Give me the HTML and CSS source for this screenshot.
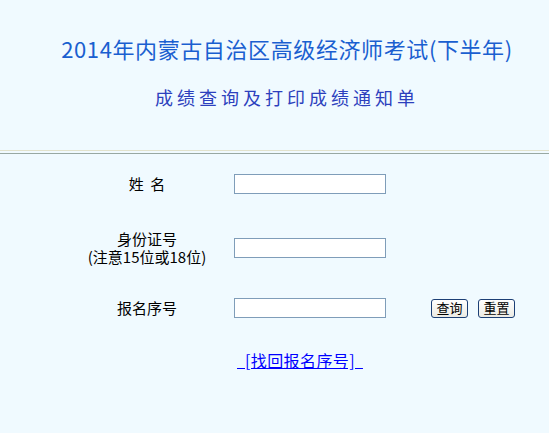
FILE: index.html
```html
<!DOCTYPE html>
<html lang="zh-CN">
<head>
    <meta charset="UTF-8">
    <title>成绩查询及打印成绩通知单</title>
    <link rel="stylesheet" href="styles.css">
</head>
<body>
    <div class="header">
        <h1>2014年内蒙古自治区高级经济师考试(下半年)</h1>
        <h2>成绩查询及打印成绩通知单</h2>
    </div>
    <div class="sep"></div>
    <form class="query">
        <div class="row row-name">
            <label class="cell-label" for="xm">姓&nbsp;&nbsp;名</label>
            <input type="text" id="xm" name="xm">
        </div>
        <div class="row row-id">
            <label class="cell-label" for="sfz">
                <span class="line">身份证号</span>
                <span class="line">(注意15位或18位)</span>
            </label>
            <input type="text" id="sfz" name="sfz">
        </div>
        <div class="row row-no">
            <label class="cell-label" for="bmxh">报名序号</label>
            <input type="text" id="bmxh" name="bmxh">
            <div class="btns">
                <button type="button">查询</button>
                <button type="reset">重置</button>
            </div>
        </div>
        <div class="row-link">
            <a href="#">&nbsp;&nbsp;[找回报名序号]&nbsp;&nbsp;</a>
        </div>
    </form>
</body>
</html>
```

FILE: styles.css
```css
/* page */
body {
    margin: 0;
    background-color: #f0faff;
    font-family: "Noto Sans CJK SC", sans-serif;
}

.header {
    padding: 33px 0 0 25px;
    text-align: center;
}

.header h1 {
    margin: 0;
    font-size: 22px;
    font-weight: normal;
    line-height: 30px;
    letter-spacing: 0.6px;
    color: #1a5fd0;
}

.header h2 {
    margin: 19px 0 0 0;
    font-size: 18px;
    font-weight: normal;
    line-height: 30px;
    letter-spacing: 4px;
    color: #2c40bd;
}

.sep {
    margin-top: 38px;
    height: 2px;
    border-top: 1px solid #e2e2cc;
    border-bottom: 1px solid #98a8a2;
}

/* form */
.query {
    padding: 10px 0 0 60px;
}

.row {
    display: flex;
    align-items: center;
    height: 40px;
}

.row-id {
    margin-top: 24px;
}

.row-no {
    margin-top: 20px;
}

.cell-label {
    width: 174px;
    text-align: center;
    font-size: 15px;
    line-height: 18px;
    color: #000000;
}

.cell-label .line {
    display: block;
    height: 18px;
}

.row input {
    box-sizing: border-box;
    width: 152px;
    height: 20px;
    margin: 0;
    padding: 1px 3px;
    border: 1px solid #7f9db9;
    background-color: #ffffff;
}

.btns {
    display: flex;
    gap: 10px;
    margin-left: 45px;
}

.btns button {
    box-sizing: border-box;
    width: 37px;
    height: 19px;
    padding: 0;
    border: 1px solid #1c3f75;
    border-radius: 3px;
    background: linear-gradient(#ffffff, #ecebe4);
    font-family: "Noto Sans CJK SC", sans-serif;
    font-size: 13px;
    line-height: 16px;
    color: #000000;
    cursor: pointer;
}

.row-link {
    margin-top: 20px;
    width: 480px;
    text-align: center;
}

.row-link a {
    font-size: 16px;
    line-height: 20px;
    letter-spacing: 0.4px;
    color: #0000ff;
}
```
